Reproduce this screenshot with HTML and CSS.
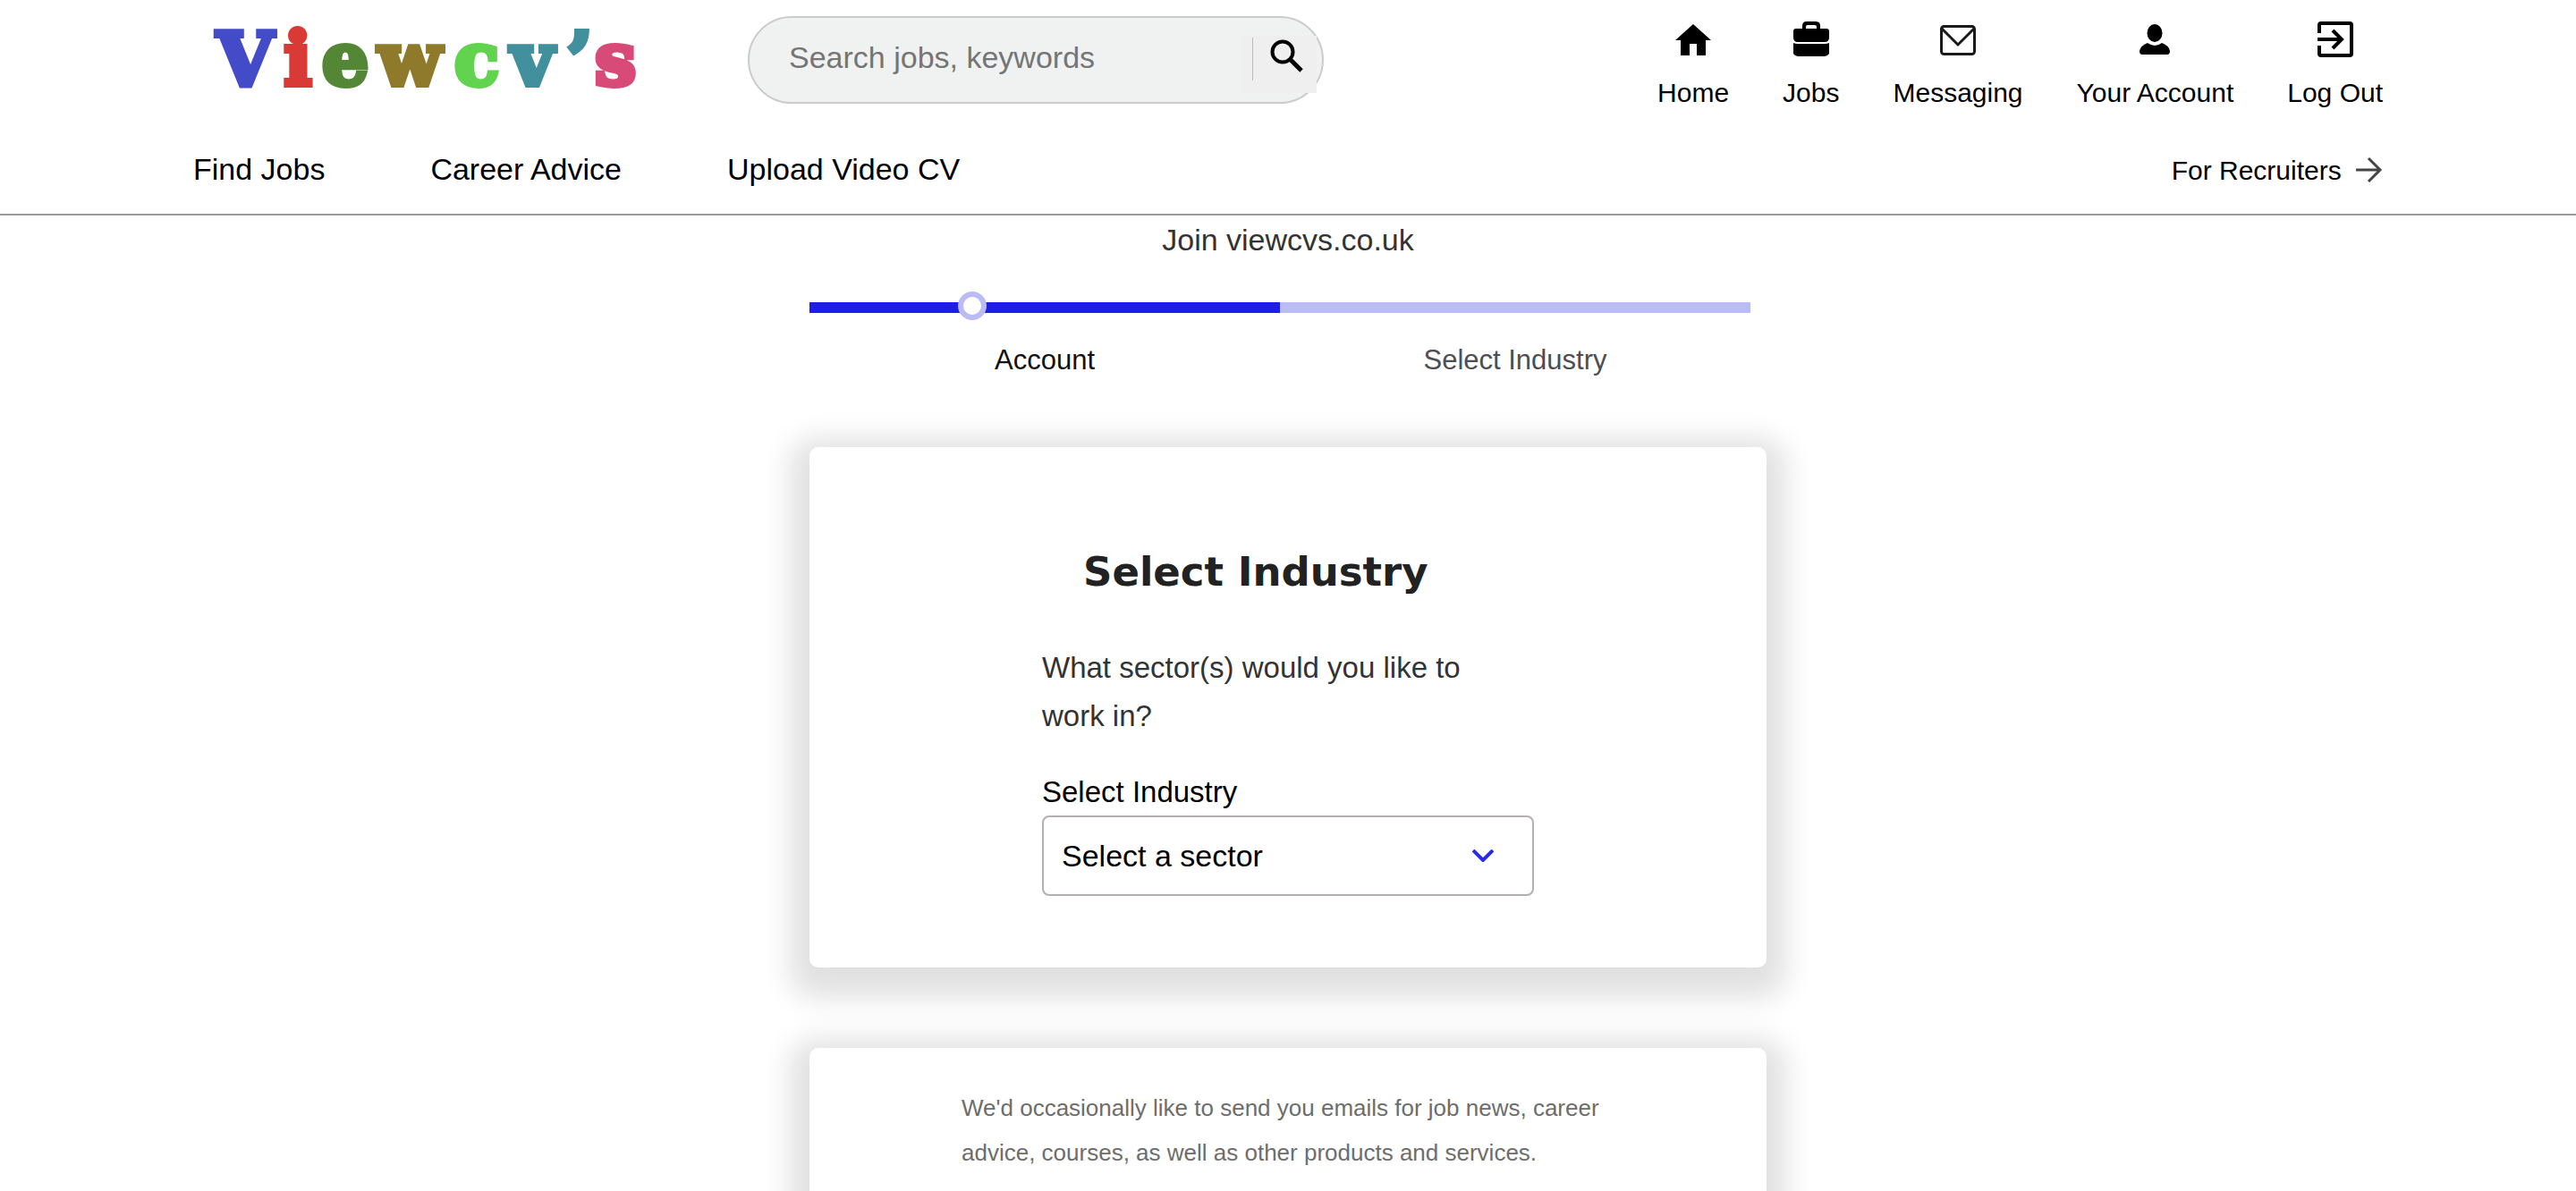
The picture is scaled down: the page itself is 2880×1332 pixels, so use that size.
FILE: index.html
```html
<!DOCTYPE html>
<html lang="en">
<head>
<meta charset="utf-8">
<meta name="viewport" content="width=device-width, initial-scale=1">
<title>Select Industry | Viewcv's</title>
<link rel="stylesheet" href="styles.css">
</head>
<body>
<header class="header">
  <div class="header-top">
    <a class="logo" href="#" aria-label="Viewcv's">
      <svg class="logo-art" viewBox="0 0 520 120" aria-hidden="true">
        <g class="logo-text">
          <text class="l-blue" x="58" y="95">V</text>
          <text class="l-red" x="117" y="95">i</text>
          <text class="l-green" x="170" y="95">e</text>
          <text class="l-olive" x="242" y="95">w</text>
          <text class="l-lime" x="317" y="95">c</text>
          <text class="l-teal" x="379" y="95">v</text>
          <text class="l-teal" x="432" y="95">’</text>
          <text class="l-pink" x="472" y="95">s</text>
        </g>
      </svg>
    </a>
    <form class="search">
      <input class="search-input" type="text" placeholder="Search jobs, keywords" aria-label="Search jobs, keywords">
      <button class="search-button" type="button" aria-label="Search">
        <svg viewBox="0 0 40 40" class="icon" aria-hidden="true"><circle cx="15" cy="16" r="11.500" fill="none" stroke="#000" stroke-width="4"/><path d="M23 24 36 37" stroke="#000" stroke-width="5"/></svg>
      </button>
    </form>
    <nav class="account-nav" aria-label="Account">
      <a href="#"><svg viewBox="0 0 40 40" class="icon" aria-hidden="true"><path d="M20 3 40 21H34V38H24V25H16V38H6V21H0Z"/></svg>Home</a>
      <a href="#"><svg viewBox="0 0 40 40" class="icon" aria-hidden="true"><path d="M10 8V5Q10 0 15 0H25Q30 0 30 5V8H37Q40 8 40 11V18Q40 23 35 23H5Q0 23 0 18V11Q0 8 3 8ZM14 8H26V6Q26 4 24 4H16Q14 4 14 6Z" fill-rule="evenodd"/><path d="M0 24Q2 25 5 25H35Q38 25 40 24V36Q38 39 35 39H5Q2 39 0 36Z"/></svg>Jobs</a>
      <a href="#"><svg viewBox="0 0 40 40" class="icon" aria-hidden="true"><rect x="1.500" y="5.500" width="37" height="31" rx="3" fill="none" stroke="#1a1a1a" stroke-width="3"/><path d="M2 8 20 26 38 8" fill="none" stroke="#1a1a1a" stroke-width="3"/></svg>Messaging</a>
      <a href="#"><svg viewBox="0 0 40 40" class="icon" aria-hidden="true"><ellipse cx="20" cy="13" rx="8.500" ry="10"/><path d="M12 24Q20 30 28 24Q36 27 37 33Q37 37 34 37H6Q3 37 3 33Q4 27 12 24Z"/></svg>Your Account</a>
      <a href="#"><svg viewBox="0 0 40 40" class="icon" aria-hidden="true"><path d="M2 13V4Q2 2 4 2H36Q38 2 38 4V36Q38 38 36 38H4Q2 38 2 36V27M0 20H27M17 10 27 20 17 30" fill="none" stroke="#000" stroke-width="4"/></svg>Log Out</a>
    </nav>
  </div>
  <nav class="main-nav" aria-label="Main">
    <a href="#">Find Jobs</a>
    <a href="#">Career Advice</a>
    <a href="#">Upload Video CV</a>
    <a class="recruiters" href="#">For Recruiters
      <svg viewBox="0 0 30 30" class="arrow" aria-hidden="true"><path d="M0 15H26M14 2 27 15 14 28" fill="none" stroke="#444" stroke-width="3"/></svg>
    </a>
  </nav>
</header>

<main class="page">
  <p class="join">Join viewcvs.co.uk</p>
  <div class="progress">
    <div class="track"><div class="track-done"></div><span class="marker"></span></div>
    <ol class="steps">
      <li class="current">Account</li>
      <li>Select Industry</li>
    </ol>
  </div>

  <section class="card card-form">
    <h1>Select Industry</h1>
    <p class="question">What sector(s) would you like to work in?</p>
    <label for="sector">Select Industry</label>
    <div class="select">
      <select id="sector"><option>Select a sector</option></select>
      <svg viewBox="0 0 24 14" class="chevron" aria-hidden="true"><path d="M1 1 12 12 23 1" fill="none" stroke="#2a2aee" stroke-width="4"/></svg>
    </div>
  </section>

  <section class="card card-emails">
    <p>We'd occasionally like to send you emails for job news, career advice, courses, as well as other products and services.</p>
  </section>
</main>
</body>
</html>
```
FILE: styles.css
```css
* { box-sizing: border-box; }

body {
  margin: 0;
  background: #fff;
  color: #000;
  font-family: "Liberation Sans", Arial, sans-serif;
  font-size: 30px;
}

a { color: inherit; text-decoration: none; }
p, h1, ol { margin: 0; padding: 0; }
.icon { display: block; width: 40px; height: 40px; }

/* Header */
.header {
  padding: 0 7.5%;
  border-bottom: 2px solid #999;
}

.header-top {
  display: flex;
  align-items: flex-start;
  height: 160px;
}

.logo { flex: none; width: 520px; margin-right: 100px; }
.logo-art { display: block; width: 100%; overflow: visible; }
.logo-text {
  font-family: "DejaVu Serif", serif;
  font-size: 82px;
  font-weight: 700;
  text-anchor: middle;
  stroke-width: 6px;
}
.l-blue { fill: #434bc8; stroke: #434bc8; }
.l-red { fill: #d93a35; stroke: #d93a35; }
.l-green { fill: #538735; stroke: #538735; }
.l-olive { fill: #8f7a2b; stroke: #8f7a2b; }
.l-lime { fill: #62d34f; stroke: #62d34f; }
.l-teal { fill: #42909e; stroke: #42909e; }
.l-pink { fill: #d84a78; stroke: #d84a78; }

.search {
  display: flex;
  width: 644px;
  height: 98px;
  margin-top: 18px;
  padding: 0 6px 0 44px;
  border: 2px solid #ccc;
  border-radius: 49px;
  background: #f0f2f1;
}
.search-input {
  flex: 1;
  min-width: 0;
  height: 88px;
  padding: 0;
  border: 0;
  outline: 0;
  background: none;
  font: inherit;
  font-size: 34px;
}
.search-input::placeholder { color: #757575; opacity: 1; }
.search-button {
  display: flex;
  gap: 18px;
  width: 84px;
  height: 64px;
  margin-top: 20px;
  padding: 2px 12px;
  border: 0;
  background: #efefef;
}
.search-button::before {
  content: "";
  flex: none;
  width: 1px;
  height: 48px;
  background: #bbb;
}
.search-button .icon { flex: none; }

.account-nav { display: flex; gap: 60px; margin-left: auto; padding-top: 24px; }
.account-nav a {
  display: flex;
  flex-direction: column;
  align-items: center;
  gap: 22px;
  line-height: 36px;
}

.main-nav {
  display: flex;
  align-items: baseline;
  gap: 118px;
  height: 79px;
  padding-top: 10px;
  font-size: 34px;
  line-height: 38px;
}
.recruiters { margin-left: auto; font-size: 30px; }
.arrow { width: 30px; height: 30px; margin-left: 8px; vertical-align: -4px; }

/* Sign-up steps */
.page {
  max-width: 1070px;
  margin: 0 auto;
}
.join {
  padding-top: 7px;
  color: #333;
  font-size: 34px;
  line-height: 40px;
  text-align: center;
}
.progress { margin: 50px 18px 0 0; }
.track {
  position: relative;
  height: 12px;
  background: #bbbbf6;
}
.track-done { width: 50%; height: 100%; background: #1e1ee6; }
.marker {
  position: absolute;
  top: -12px;
  left: 166px;
  width: 32px;
  height: 32px;
  border: 6px solid #bbbbf6;
  border-radius: 50%;
  background: #fff;
}
.steps {
  display: grid;
  grid-template-columns: 1fr 1fr;
  padding-top: 35px;
  list-style: none;
  color: #4d4d52;
  font-size: 31px;
  line-height: 36px;
  text-align: center;
}
.steps .current { color: #111; }

/* Cards */
.card {
  border-radius: 10px;
  background: #fff;
  box-shadow: 0 12px 32px 22px rgba(0, 0, 0, .12);
}
.card-form {
  position: relative;
  margin-top: 79px;
  padding: 108px 260px 80px;
}
.card-form h1 {
  padding-left: 46px;
  color: #222;
  font-family: "DejaVu Sans", sans-serif;
  font-size: 45px;
  font-weight: 700;
  line-height: 64px;
}
.question {
  padding: 48px 32px 0 0;
  color: #333;
  font-size: 33px;
  line-height: 54px;
}
.card-form label {
  display: block;
  padding-top: 38px;
  font-size: 33px;
  line-height: 40px;
}
.select { display: grid; align-items: center; margin-top: 6px; }
.select select {
  grid-area: 1 / 1;
  width: 100%;
  height: 90px;
  padding: 0 70px 0 20px;
  border: 2px solid #b5b0b0;
  border-radius: 8px;
  appearance: none;
  background: #fff;
  color: #000;
  font: inherit;
  font-size: 34px;
}
.chevron {
  grid-area: 1 / 1;
  justify-self: end;
  width: 24px;
  height: 14px;
  margin-right: 45px;
  pointer-events: none;
}
.card-emails {
  margin-top: 90px;
  padding: 42px 170px 80px;
  color: #6d6d6d;
  font-size: 26px;
  line-height: 50px;
}
```
